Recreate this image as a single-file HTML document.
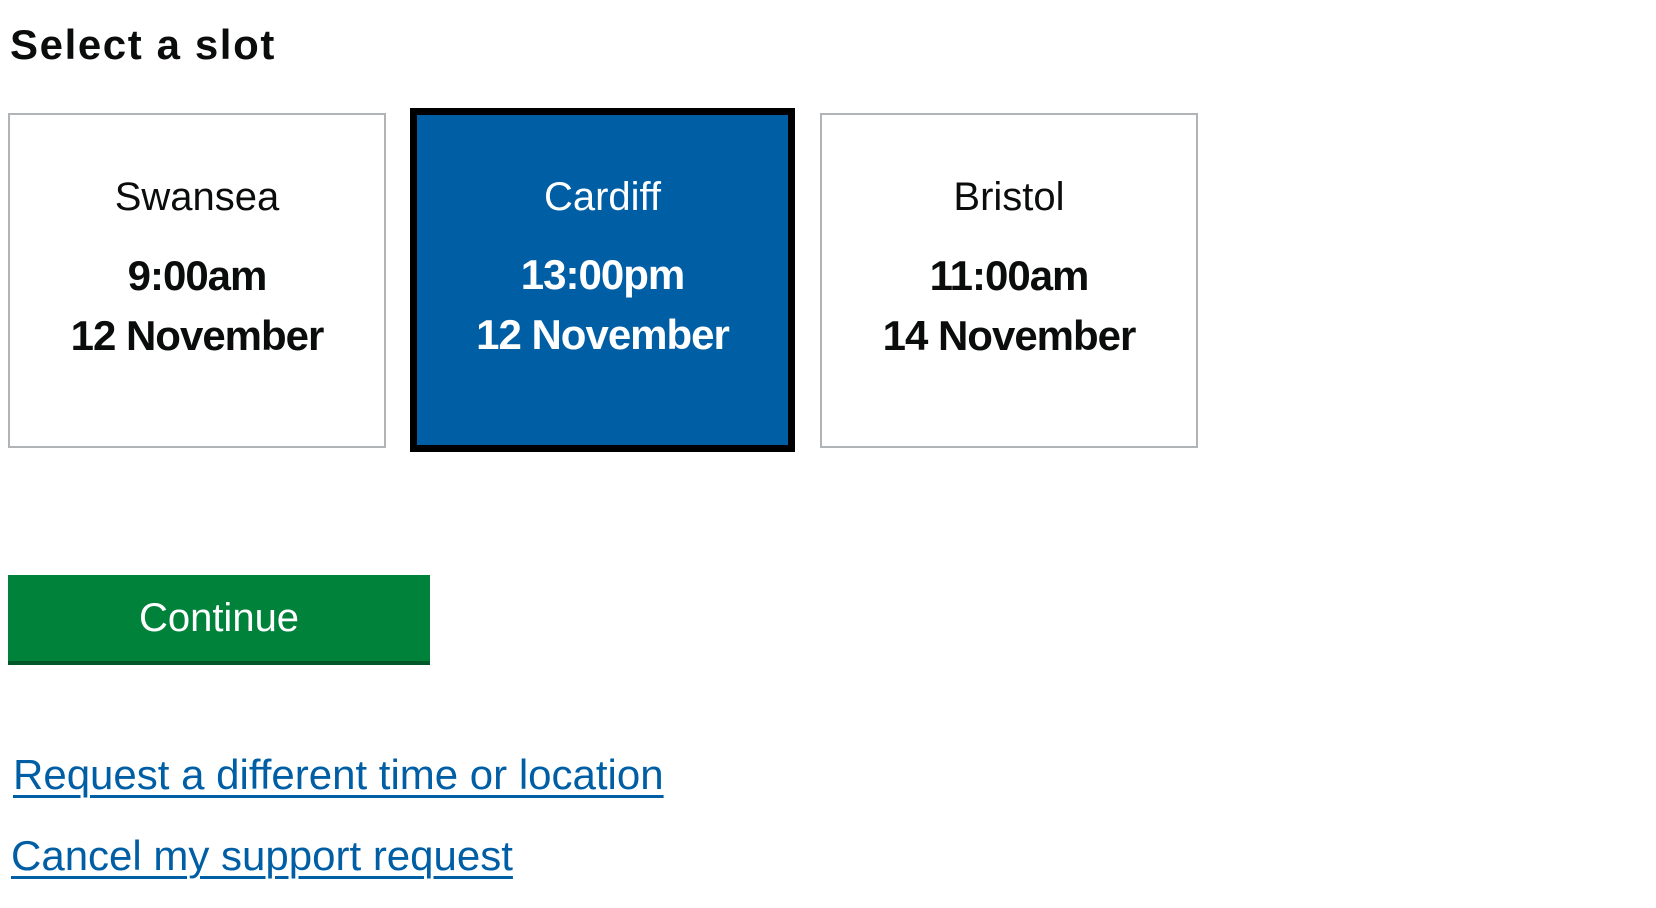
<!DOCTYPE html>
<html><head><style>
body{margin:0;width:1656px;height:908px;background:#fff;font-family:"Liberation Sans",sans-serif;position:relative;overflow:hidden}
h1{position:absolute;left:10px;top:21px;margin:0;font-size:42px;font-weight:bold;letter-spacing:1.6px;color:#0b0c0c;line-height:48px}
.box{position:absolute;top:113px;width:374px;height:331px;border:2px solid #b1b4b6;background:#fff;color:#0b0c0c;text-align:center}
.sel{top:108px;left:410px;width:371px;height:330px;border:7px solid #000;background:#005ea5;color:#fff}
.loc{position:absolute;left:0;right:0;top:59px;font-size:40px;line-height:46px}
.t{position:absolute;left:0;right:0;top:131px;font-size:42px;font-weight:bold;line-height:60px;letter-spacing:-1px}
.sel .loc{top:59px}.sel .t{top:130px}
.btn{position:absolute;left:8px;top:575px;width:422px;height:86px;background:#00823b;box-shadow:0 4px 0 #00582a;color:#fff;font-size:40px;text-align:center;line-height:86px}
.lk{position:absolute;color:#005ea5;font-size:42px;text-decoration:underline;text-decoration-thickness:3px;text-underline-offset:6px;line-height:48px;white-space:nowrap}
</style></head><body>
<h1>Select a slot</h1>
<div class="box" style="left:8px"><div class="loc">Swansea</div><div class="t">9:00am<br>12 November</div></div>
<div class="box sel"><div class="loc">Cardiff</div><div class="t">13:00pm<br>12 November</div></div>
<div class="box" style="left:820px"><div class="loc">Bristol</div><div class="t">11:00am<br>14 November</div></div>
<div class="btn">Continue</div>
<div class="lk" style="left:13px;top:751px">Request a different time or location</div>
<div class="lk" style="left:11px;top:832px">Cancel my support request</div>
</body></html>
